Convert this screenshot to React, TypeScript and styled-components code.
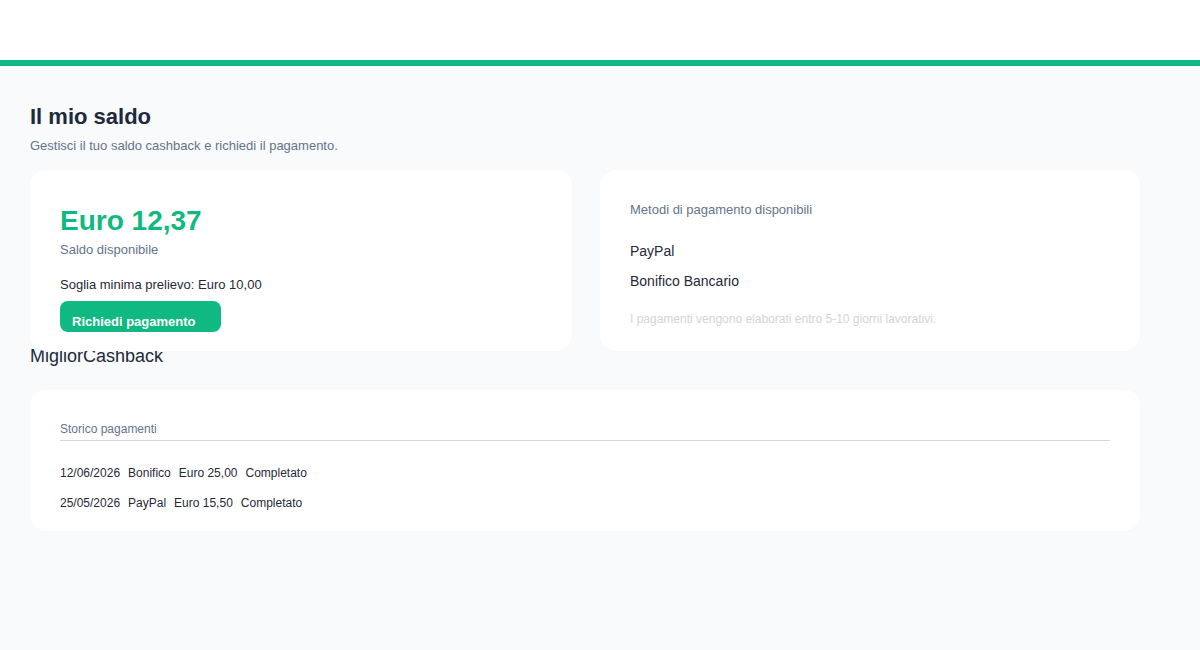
import React, { ReactElement } from 'react';
import styled, { createGlobalStyle } from 'styled-components';

const GlobalStyle = createGlobalStyle`
  * {
    box-sizing: border-box;
  }

  body {
    margin: 0;
    background: #f8fafc;
    font-family: 'Liberation Sans', Arial, sans-serif;
    color: #1f2937;
  }
`;

const Header = styled.header`
  height: 66px;
  background: #ffffff;
  border-bottom: 6px solid #10b981;
`;

const Main = styled.main`
  width: 1140px;
  padding: 37px 0 40px 30px;
`;

const Title = styled.h1`
  margin: 0;
  font-size: 22px;
  line-height: 28px;
  font-weight: 700;
  color: #1e293b;
`;

const Subtitle = styled.p`
  margin: 6px 0 0;
  font-size: 13px;
  line-height: 18px;
  color: #64748b;
`;

const CardRow = styled.div`
  display: grid;
  grid-template-columns: 542px 540px;
  grid-auto-rows: 181px;
  gap: 28px;
  margin-top: 15px;
  position: relative;
  z-index: 1;
`;

const Card = styled.section`
  background: #ffffff;
  border-radius: 16px;
  padding: 31px 30px 20px;
  box-shadow: 0 1px 2px rgba(15, 23, 42, 0.02);
  overflow: hidden;
`;

const Amount = styled.div`
  font-size: 28px;
  line-height: 40px;
  font-weight: 700;
  color: #10b981;
`;

const MutedLabel = styled.div`
  font-size: 13px;
  line-height: 18px;
  color: #64748b;
`;

const Threshold = styled.div`
  margin-top: 17px;
  font-size: 13px;
  line-height: 18px;
  color: #1f2937;
`;

const PayButton = styled.button`
  display: block;
  margin-top: 7px;
  width: 161px;
  height: 31px;
  padding: 11px 12px 0;
  border: none;
  border-radius: 8px;
  background: #10b981;
  color: #ffffff;
  font-family: inherit;
  font-size: 13px;
  line-height: 16px;
  font-weight: 700;
  text-align: left;
  cursor: pointer;
`;

const MethodList = styled.ul`
  list-style: none;
  margin: 22px 0 0;
  padding: 0;
  display: flex;
  flex-direction: column;
  gap: 10px;
`;

const Method = styled.li`
  font-size: 14px;
  line-height: 20px;
  color: #1f2937;
`;

const Note = styled.p`
  margin: 20px 0 0;
  font-size: 12px;
  line-height: 16px;
  color: #d1d5db;
`;

const Brand = styled.div`
  margin-top: -4px;
  font-size: 18px;
  line-height: 18px;
  color: #1e293b;
`;

const HistoryCard = styled(Card)`
  margin-top: 25px;
  padding: 31px 30px 20px;
`;

const HistoryTitle = styled.div`
  font-size: 12px;
  line-height: 16px;
  padding-bottom: 3px;
  color: #64748b;
  border-bottom: 1px solid #d1d5db;
`;

const HistoryList = styled.div`
  margin-top: 24px;
  display: flex;
  flex-direction: column;
  gap: 14px;
`;

const HistoryRow = styled.div`
  display: flex;
  gap: 8px;
  font-size: 12px;
  line-height: 16px;
  color: #1f2937;
`;

const payments = [
  { date: '12/06/2026', method: 'Bonifico', amount: 'Euro 25,00', status: 'Completato' },
  { date: '25/05/2026', method: 'PayPal', amount: 'Euro 15,50', status: 'Completato' },
];

function App(): ReactElement {
  return (
    <>
      <GlobalStyle />
      <Header />
      <Main>
        <Title>Il mio saldo</Title>
        <Subtitle>Gestisci il tuo saldo cashback e richiedi il pagamento.</Subtitle>

        <CardRow>
          <Card>
            <Amount>Euro 12,37</Amount>
            <MutedLabel>Saldo disponibile</MutedLabel>
            <Threshold>Soglia minima prelievo: Euro 10,00</Threshold>
            <PayButton>Richiedi pagamento</PayButton>
          </Card>

          <Card>
            <MutedLabel>Metodi di pagamento disponibili</MutedLabel>
            <MethodList>
              <Method>PayPal</Method>
              <Method>Bonifico Bancario</Method>
            </MethodList>
            <Note>I pagamenti vengono elaborati entro 5-10 giorni lavorativi.</Note>
          </Card>
        </CardRow>

        <Brand>MigliorCashback</Brand>

        <HistoryCard>
          <HistoryTitle>Storico pagamenti</HistoryTitle>
          <HistoryList>
            {payments.map((p) => (
              <HistoryRow key={p.date}>
                <span>{p.date}</span>
                <span>{p.method}</span>
                <span>{p.amount}</span>
                <span>{p.status}</span>
              </HistoryRow>
            ))}
          </HistoryList>
        </HistoryCard>
      </Main>
    </>
  );
}

export default App;
